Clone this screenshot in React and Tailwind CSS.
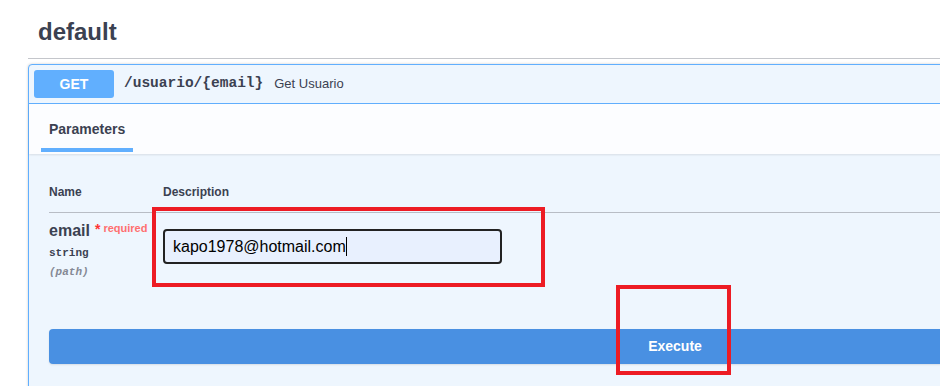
export default function App() {
    return (
        <div className="relative w-[940px] h-[386px] overflow-hidden bg-white text-[#3b4151] font-['Liberation_Sans',Arial,sans-serif]">
            <div className="w-[1350px] pl-[28px]">
                {/* Tag heading */}
                <div className="w-[1294px] h-[59px] border-b border-[#c4c6cb] pl-[10px] pt-[18px]">
                    <h3 className="text-[24px] leading-[28px] font-bold">default</h3>
                </div>

                {/* Operation block */}
                <div className="mt-[5px] w-[1294px] rounded-[4px] border border-[#61affe] bg-[#eef6fe] shadow-[0_0_3px_rgba(0,0,0,0.19)]">
                    <div className="flex items-center p-[5px] border-b border-[#61affe]">
                        <div className="w-[80px] h-[28px] rounded-[3px] bg-[#61affe] flex items-center justify-center text-white text-[14px] font-bold">
                            GET
                        </div>
                        <span className="ml-[10px] font-['Liberation_Mono',monospace] text-[14.5px] font-bold">
                            /usuario/{'{email}'}
                        </span>
                        <span className="ml-[11px] text-[13px]">Get Usuario</span>
                    </div>

                    {/* Tab header */}
                    <div className="h-[50px] px-[12px] bg-[#fcfdff] shadow-[0_1px_2px_rgba(0,0,0,0.1)]">
                        <div className="inline-flex flex-col">
                            <h4 className="px-[8px] pt-[17px] text-[14px] leading-[16px] font-bold">Parameters</h4>
                            <div className="mt-[11px] h-[4px] bg-[#61affe]" />
                        </div>
                    </div>

                    {/* Parameters table */}
                    <div className="px-[20px] pt-[30px]">
                        <div className="flex h-[29px] border-b border-[#b8bdc5] text-[12px] leading-[16px] font-bold">
                            <div className="w-[114px]">Name</div>
                            <div>Description</div>
                        </div>
                        <div className="flex h-[96px]">
                            <div className="w-[114px] pt-[8px]">
                                <div className="flex items-start">
                                    <span className="text-[16px] leading-[20px] font-bold">email</span>
                                    <span className="ml-[5px] text-[14px] leading-[16px] font-bold text-[#ff3333]">*</span>
                                    <span className="ml-[3px] text-[11px] leading-[14px] font-semibold text-[#ff7070]">required</span>
                                </div>
                                <div className="mt-[4px] font-['Liberation_Mono',monospace] text-[11px] leading-[16px] font-semibold">string</div>
                                <div className="mt-[3px] font-['Liberation_Mono',monospace] text-[11px] leading-[16px] font-semibold italic text-[#858995]">(path)</div>
                            </div>
                            <div className="pt-[16px]">
                                <div className="w-[339px] h-[35px] flex items-center rounded-[4px] border-2 border-[#222] bg-[#e8f0fe] px-[8px] text-[16px] text-black">
                                    <span>kapo1978@hotmail.com</span>
                                    <span className="w-px h-[19px] bg-black" />
                                </div>
                            </div>
                        </div>
                        <div className="pt-[20px] pb-[40px]">
                            <div className="h-[35px] rounded-[4px] bg-[#4990e2] flex items-center justify-center text-white text-[14px] font-bold shadow-[0_1px_2px_rgba(0,0,0,0.1)]">
                                Execute
                            </div>
                        </div>
                    </div>
                </div>
            </div>

            {/* Red annotation boxes */}
            <div className="absolute left-[152px] top-[207px] w-[393px] h-[80px] border-4 border-[#ed1c24]" />
            <div className="absolute left-[616px] top-[285px] w-[115px] h-[90px] border-4 border-[#ed1c24]" />
        </div>
    )
}
